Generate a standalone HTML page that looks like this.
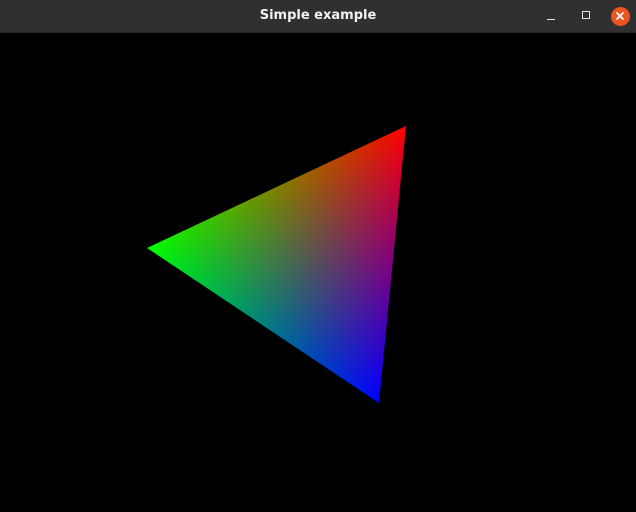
<!DOCTYPE html>
<html><head><meta charset="utf-8"><style>
html,body{margin:0;padding:0;width:636px;height:512px;overflow:hidden;background:#000}
.bar{position:absolute;left:0;top:0;width:636px;height:33px;background:#303030;border-bottom:1px solid #262626;box-sizing:border-box}
.title{position:absolute;left:0;width:636px;top:8px;text-align:center;color:#f2f2f2;font:bold 13px "DejaVu Sans","Liberation Sans",sans-serif}
svg{position:absolute;left:0;top:0}
</style></head><body>
<div class="bar"><div class="title">Simple example</div>
<div style="position:absolute;left:547px;top:19px;width:8px;height:1px;background:#e6e6e6"></div>
<div style="position:absolute;left:582px;top:11px;width:6px;height:6px;border:1px solid #e6e6e6"></div>
<div style="position:absolute;left:611px;top:7px;width:19px;height:19px;border-radius:50%;background:#e95420"></div>
<svg width="636" height="33" viewBox="0 0 636 33"><path d="M616.5 12.5l7 7M623.5 12.5l-7 7" stroke="#fff" stroke-width="1.6"/></svg>
</div>
<svg width="636" height="512" viewBox="0 0 636 512" style="top:0">
<defs>
<linearGradient id="r" gradientUnits="userSpaceOnUse" x1="406" y1="126" x2="269.7" y2="330"><stop offset="0" stop-color="#f00"/><stop offset="1" stop-color="#000"/></linearGradient>
<linearGradient id="g" gradientUnits="userSpaceOnUse" x1="147" y1="248" x2="391.8" y2="271.9"><stop offset="0" stop-color="#0f0"/><stop offset="1" stop-color="#000"/></linearGradient>
<linearGradient id="b" gradientUnits="userSpaceOnUse" x1="379" y1="403" x2="277.1" y2="186.7"><stop offset="0" stop-color="#00f"/><stop offset="1" stop-color="#000"/></linearGradient>
</defs>
<g style="isolation:isolate">
<polygon points="406,126 147,248 379,403" fill="url(#r)"/>
<polygon points="406,126 147,248 379,403" fill="url(#g)" style="mix-blend-mode:screen"/>
<polygon points="406,126 147,248 379,403" fill="url(#b)" style="mix-blend-mode:screen"/>
</g>
</svg>
</body></html>
